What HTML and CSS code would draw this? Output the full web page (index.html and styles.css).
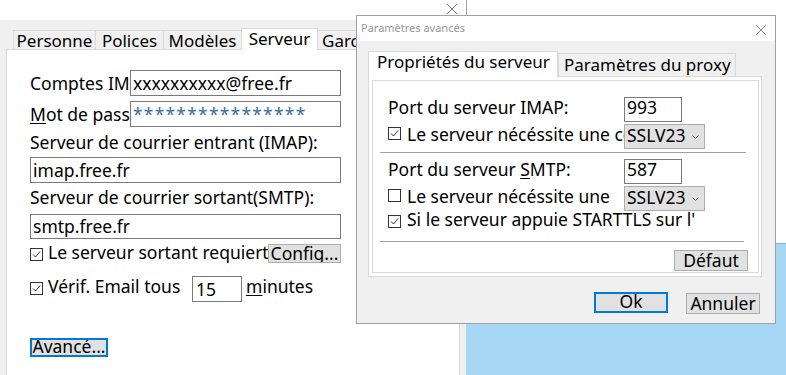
FILE: index.html
```html
<!DOCTYPE html>
<html lang="fr">
<head>
  <meta charset="UTF-8">
  <title>Paramètres avancés</title>
  <link rel="stylesheet" href="styles.css">
</head>
<body>
  <!-- Fenêtre principale : onglet Serveur -->
  <section class="win-main">
    <div class="main-title">
      <svg class="close" viewBox="0 0 10 10"><path d="M0 0L10 10M10 0L0 10" stroke="#7a7a7a" stroke-width="1"/></svg>
    </div>
    <div class="main-client">
      <div class="tabs">
        <div class="tab t-personne">Personne</div>
        <div class="tab t-polices">Polices</div>
        <div class="tab t-modeles">Modèles</div>
        <div class="tab tab-on t-serveur">Serveur</div>
        <div class="tab t-garde">Garde</div>
      </div>
      <div class="panel">
        <div class="row">
          <span class="lbl">Comptes IMAP</span>
          <div class="edit">xxxxxxxxxx@free.fr</div>
        </div>
        <div class="row row-pwd">
          <span class="lbl"><u>M</u>ot de passe</span>
          <div class="edit pwd">****************</div>
        </div>
        <div class="cap cap-in">Serveur de courrier entrant (IMAP):</div>
        <div class="edit edit-wide edit-in">imap.free.fr</div>
        <div class="cap cap-out">Serveur de courrier sortant(SMTP):</div>
        <div class="edit edit-wide edit-out">smtp.free.fr</div>
        <div class="chkrow">
          <svg class="chk" viewBox="0 0 13 13"><rect x="0.5" y="0.5" width="12" height="12" fill="#fff" stroke="#333"/><path d="M3 6.5L5.5 9L10 3.5" fill="none" stroke="#333"/></svg>
          <span class="chk-lbl">Le serveur sortant requiert une authentification</span>
          <div class="btn btn-config">Config...</div>
        </div>
        <div class="verif">
          <svg class="chk" viewBox="0 0 13 13"><rect x="0.5" y="0.5" width="12" height="12" fill="#fff" stroke="#333"/><path d="M3 6.5L5.5 9L10 3.5" fill="none" stroke="#333"/></svg>
          <span class="verif-lbl">Vérif. Email tous</span>
          <div class="edit edit-num">15</div>
          <span class="minutes"><u>m</u>inutes</span>
        </div>
        <div class="btn btn-focus btn-avance">Avancé...</div>
      </div>
    </div>
  </section>

  <!-- Fenêtre bleue en arrière-plan -->
  <div class="win-blue"></div>

  <!-- Boîte de dialogue -->
  <section class="dlg">
    <div class="dlg-title">
      <span>Paramètres avancés</span>
      <svg class="close dlg-close" viewBox="0 0 10 10"><path d="M0 0L10 10M10 0L0 10" stroke="#8a8a8a" stroke-width="1"/></svg>
    </div>
    <div class="dlg-body">
      <div class="dtabs">
        <div class="dtab dtab-on">Propriétés du serveur</div>
        <div class="dtab">Paramètres du proxy</div>
      </div>
      <div class="dpanel">
        <div class="dbox">
          <div class="drow">
            <span class="dlbl"><span>Port du serveur IMAP:</span></span>
            <div class="dedit">993</div>
          </div>
          <div class="drow drow-tight">
            <span class="dlbl">
              <svg class="chk" viewBox="0 0 13 13"><rect x="0.5" y="0.5" width="12" height="12" fill="#fff" stroke="#333"/><path d="M3 6.5L5.5 9L10 3.5" fill="none" stroke="#333"/></svg>
              <span>Le serveur nécéssite une connexion sécurisée</span>
            </span>
            <div class="dcombo">SSLV23<svg class="chev" viewBox="0 0 7 4"><path d="M0.5 0.5L3.5 3.5L6.5 0.5" fill="none" stroke="#666"/></svg></div>
          </div>
          <div class="dsep"></div>
          <div class="drow drow-smtp">
            <span class="dlbl"><span>Port du serveur <u>S</u>MTP:</span></span>
            <div class="dedit">587</div>
          </div>
          <div class="drow drow-tight">
            <span class="dlbl">
              <svg class="chk" viewBox="0 0 13 13"><rect x="0.5" y="0.5" width="12" height="12" fill="#fff" stroke="#333"/></svg>
              <span>Le serveur nécéssite une</span>
            </span>
            <div class="dcombo">SSLV23<svg class="chev" viewBox="0 0 7 4"><path d="M0.5 0.5L3.5 3.5L6.5 0.5" fill="none" stroke="#666"/></svg></div>
          </div>
          <div class="dline">
            <svg class="chk" viewBox="0 0 13 13"><rect x="0.5" y="0.5" width="12" height="12" fill="#fff" stroke="#333"/><path d="M3 6.5L5.5 9L10 3.5" fill="none" stroke="#333"/></svg>
            <span>Si le serveur appuie STARTTLS sur l'</span>
          </div>
          <div class="dsep dsep-2"></div>
          <div class="btn btn-defaut">Défaut</div>
        </div>
      </div>
      <div class="dbtns">
        <div class="btn btn-focus btn-ok">Ok</div>
        <div class="btn btn-annuler">Annuler</div>
      </div>
    </div>
  </section>
</body>
</html>
```

FILE: styles.css
```css
/* Base */
* {
  margin: 0;
  padding: 0;
  box-sizing: border-box;
}
body {
  width: 786px;
  height: 375px;
  overflow: hidden;
  position: relative;
  background: #fff;
  color: #000;
  font-family: "Noto Sans", "Open Sans", sans-serif;
  font-size: 17.5px;
}
u {
  text-decoration: underline;
  text-underline-offset: 2px;
}

/* Fenêtre principale */
.win-main {
  position: absolute;
  left: 0;
  top: 0;
  z-index: 1;
  width: 467px;
  height: 375px;
  border-right: 1px solid #a3a3a3;
  display: flex;
  flex-direction: column;
}
.main-title {
  height: 20px;
  background: #fff;
  display: flex;
  justify-content: flex-end;
  padding: 4px 9px 0 0;
}
.close {
  width: 10px;
  height: 10px;
}
.main-client {
  flex: 1;
  background: #f0f0f0;
  padding: 8px 6px 0 6px;
  display: flex;
  flex-direction: column;
}

/* Onglets */
.tabs {
  display: flex;
  align-items: flex-end;
  height: 21px;
  margin-left: 7px;
  position: relative;
  z-index: 1;
}
.tab {
  height: 19px;
  border: 1px solid #d9d9d9;
  border-bottom: 0;
  background: #f0f0f0;
  font-size: 17px;
  line-height: 19px;
  text-align: center;
  white-space: nowrap;
  overflow: hidden;
  margin-right: -1px;
}
.tab-on {
  height: 22px;
  background: #fff;
  margin-bottom: -1px;
}
.t-personne { width: 83px; }
.t-polices { width: 69px; }
.t-modeles { width: 79px; }
.t-serveur { width: 77px; }
.t-garde { width: 70px; text-align: left; padding-left: 4px; }

/* Panneau du formulaire */
.panel {
  flex: 1;
  background: #fff;
  border: 1px solid #d9d9d9;
  border-bottom: 0;
  padding: 20px 0 0 23px;
  display: flex;
  flex-direction: column;
  align-items: flex-start;
}
.row {
  display: flex;
  align-items: center;
  height: 26px;
}
.row-pwd { margin-top: 5px; }
.lbl {
  width: 100px;
  overflow: hidden;
  white-space: nowrap;
  line-height: 22px;
}
.edit {
  width: 211px;
  height: 26px;
  border: 1px solid #7a7a7a;
  background: #fff;
  padding: 0 2px;
  line-height: 24px;
  white-space: nowrap;
  overflow: hidden;
}
.pwd {
  color: #3c6e9e;
  letter-spacing: 1.2px;
}
.cap { line-height: 22px; white-space: nowrap; }
.cap-in { margin-top: 4px; }
.cap-out { margin-top: 3px; }
.edit-wide { width: 311px; }
.edit-in { margin-top: 4px; }
.edit-out { margin-top: 6px; height: 25px; line-height: 23px; }

.chk {
  width: 13px;
  height: 13px;
  flex: none;
}
.chkrow {
  display: flex;
  height: 19px;
  margin-top: 5px;
}
.chkrow .chk { margin: 4px 5px 0 0; }
.chk-lbl {
  width: 220px;
  line-height: 17px;
  white-space: nowrap;
  overflow: hidden;
}
.btn {
  background: #e1e1e1;
  border: 1px solid #adadad;
  text-align: center;
  white-space: nowrap;
  overflow: hidden;
}
.btn-focus { border: 2px solid #0078d7; }
.btn-config {
  width: 73px;
  height: 19px;
  line-height: 17px;
}
.verif {
  display: flex;
  height: 26px;
  margin-top: 13px;
}
.verif .chk { margin: 6px 5px 0 0; }
.verif-lbl {
  width: 144px;
  line-height: 20px;
  white-space: nowrap;
}
.edit-num {
  width: 50px;
  padding-left: 3px;
}
.minutes {
  margin-left: 4px;
  line-height: 20px;
}
.btn-avance {
  width: 78px;
  height: 19px;
  margin-top: 36px;
  line-height: 13px;
}

/* Fenêtre bleue */
.win-blue {
  position: absolute;
  left: 466px;
  top: 243px;
  z-index: 2;
  width: 320px;
  height: 132px;
  background: #a6d7f4;
  border-top: 1px solid #80bbe8;
}

/* Boîte de dialogue Paramètres avancés */
.dlg {
  position: absolute;
  left: 356px;
  top: 15px;
  z-index: 3;
  width: 420px;
  height: 309px;
  border: 1px solid #a0a0a0;
  background: #f0f0f0;
  display: flex;
  flex-direction: column;
}
.dlg-title {
  height: 25px;
  background: #fff;
  display: flex;
  justify-content: space-between;
  align-items: flex-start;
  padding: 4px 9px 0 4px;
  font-size: 11px;
  line-height: 15px;
  color: #999;
}
.dlg-close { margin-top: 5px; }
.dlg-body {
  flex: 1;
  padding: 10px 13px 0 11px;
  display: flex;
  flex-direction: column;
}
.dtabs {
  display: flex;
  align-items: flex-end;
  height: 25px;
  position: relative;
  z-index: 1;
}
.dtab {
  width: 178px;
  height: 23px;
  border: 1px solid #d9d9d9;
  border-bottom: 0;
  background: #f0f0f0;
  font-size: 17px;
  line-height: 19px;
  padding: 1px 0 0 5px;
  white-space: nowrap;
  overflow: hidden;
}
.dtab-on {
  width: 190px;
  height: 26px;
  background: #fff;
  padding: 0 0 0 8px;
  margin-bottom: -1px;
}
.dpanel {
  height: 201px;
  border: 1px solid #d9d9d9;
  background: #fff;
  padding: 3px 2px 3px 3px;
}
.dbox {
  height: 100%;
  border: 1px solid #d9d9d9;
  padding: 16px 0 0 15px;
  display: flex;
  flex-direction: column;
}
.drow {
  display: flex;
  height: 25px;
}
.drow-tight { margin-top: 2px; }
.drow-smtp { margin-top: 6px; }
.dlbl {
  width: 236px;
  display: flex;
  align-items: flex-start;
  line-height: 20px;
  white-space: nowrap;
  overflow: hidden;
}
.dlbl .chk,
.dline .chk { margin: 3px 6px 0 0; }
.dedit {
  width: 58px;
  height: 25px;
  border: 1px solid #7a7a7a;
  background: #fff;
  padding-left: 2px;
  line-height: 17px;
  padding-top: 1px;
}
.dcombo {
  width: 81px;
  height: 25px;
  background: #e1e1e1;
  border: 1px solid #adadad;
  padding-left: 2px;
  line-height: 21px;
  display: flex;
  align-items: flex-start;
  justify-content: space-between;
}
.chev {
  width: 7px;
  height: 4px;
  margin: 10px 5px 0 0;
}
.dsep {
  width: 366px;
  height: 1px;
  background: #a0a0a0;
  margin: 3px 0 0 -8px;
}
.dsep-2 {
  width: 364px;
  margin-top: 14px;
}
.dline {
  display: flex;
  height: 16px;
  line-height: 16px;
  white-space: nowrap;
}
.dline .chk { margin-top: 4px; }
.btn-defaut {
  align-self: flex-end;
  width: 74px;
  height: 21px;
  margin: 8px 10px 0 0;
  line-height: 18px;
}
.dbtns {
  display: flex;
  justify-content: flex-end;
  align-items: flex-start;
  gap: 18px;
  margin-top: 15px;
  padding-right: 2px;
}
.btn-ok {
  width: 74px;
  height: 21px;
  line-height: 15px;
}
.btn-annuler {
  width: 74px;
  height: 21px;
  margin-top: 1px;
  line-height: 18px;
}
```
